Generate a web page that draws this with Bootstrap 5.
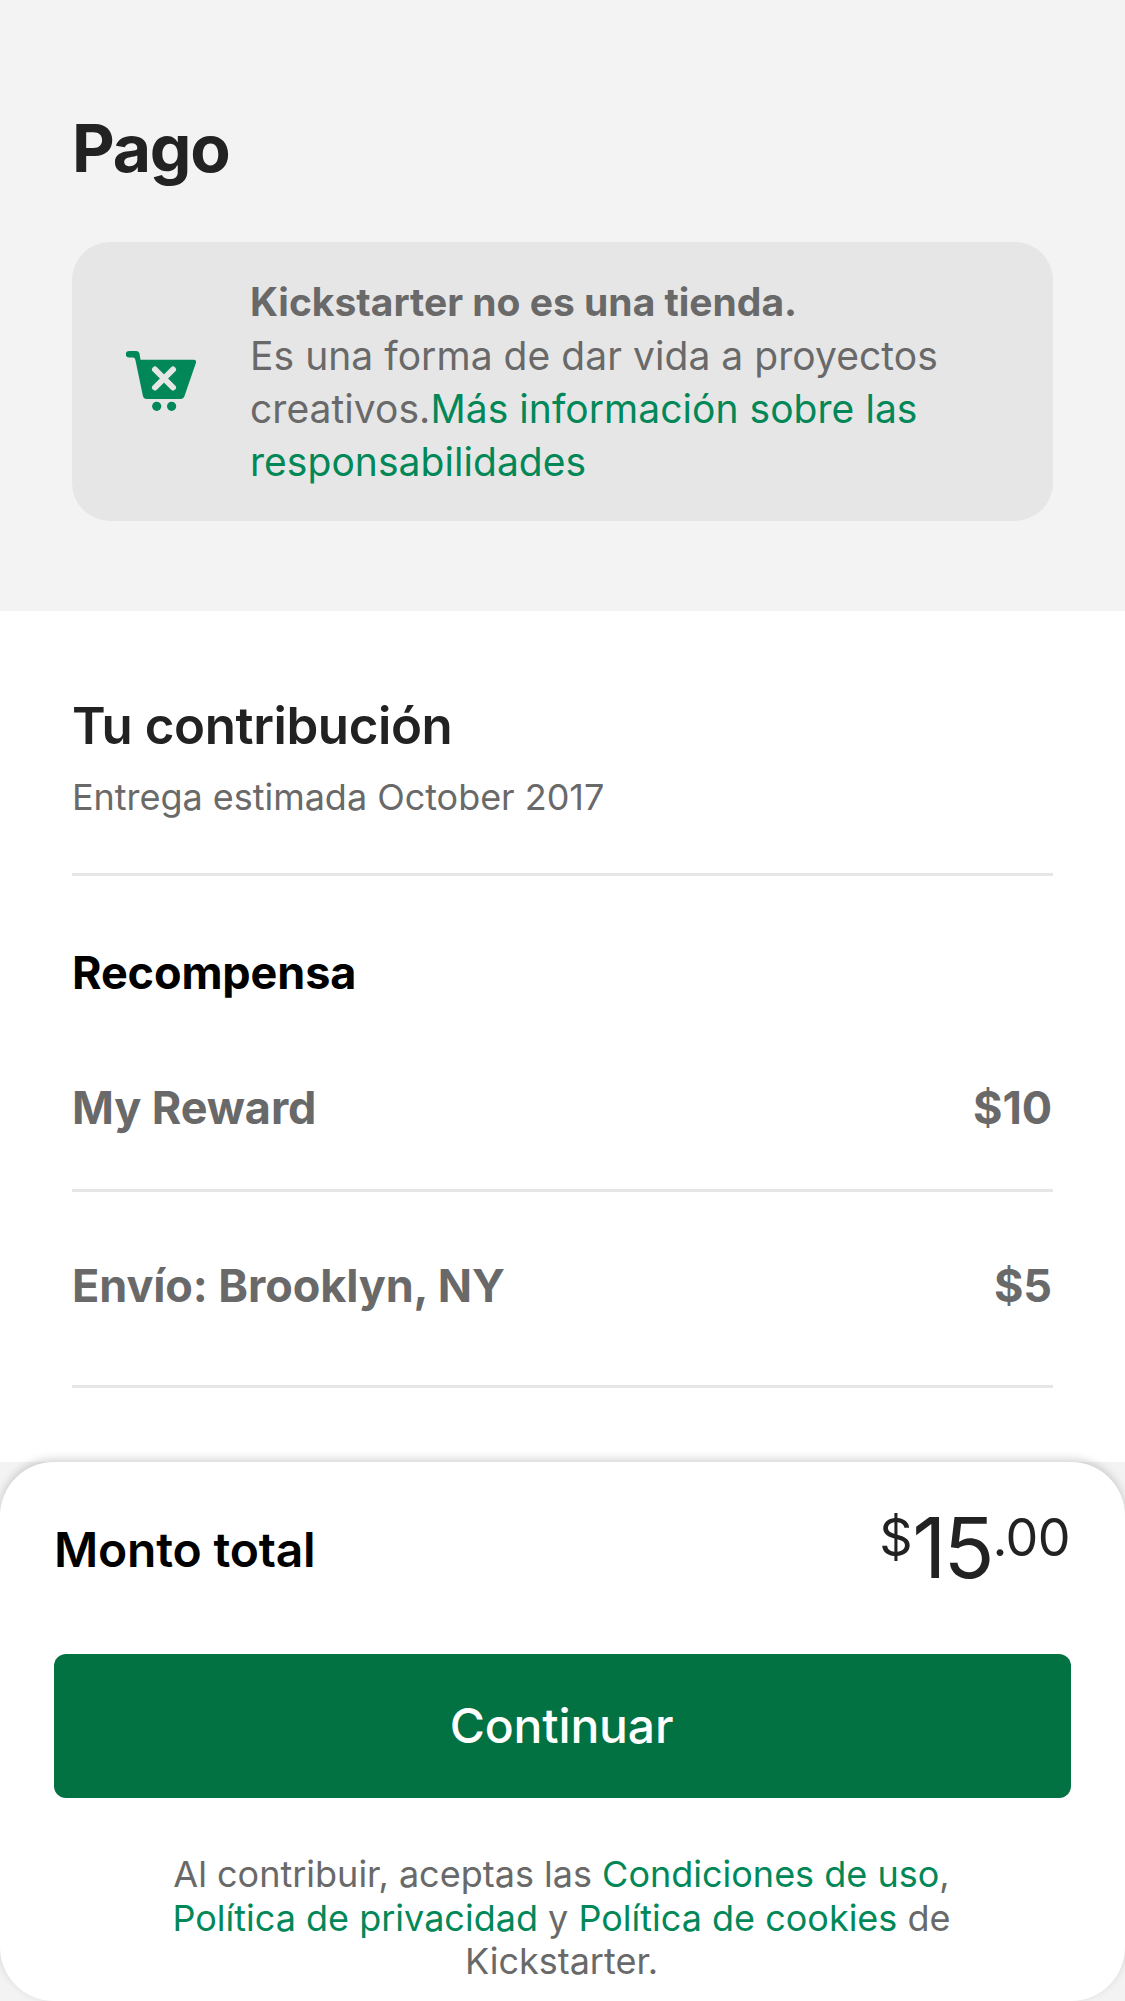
<!DOCTYPE html>
<html lang="es"><head><meta charset="utf-8"><meta name="viewport" content="width=device-width, initial-scale=1"><title>Pago</title>
<link href="https://cdn.jsdelivr.net/npm/bootstrap@5.3.0/dist/css/bootstrap.min.css" rel="stylesheet">
<style>
body{font-family:Inter,sans-serif;background:#f3f3f3;color:#696969;height:2001px;overflow:hidden}
a{color:#028858;text-decoration:none}
.head-area{height:611px;padding:109px 72px 0}
.page-title{font-size:66px;font-weight:700;line-height:78px;letter-spacing:-1.2px;color:#222;margin:0 0 55px}
.notice{height:279px;background:#e6e6e6;border-radius:38px;padding:0 54px}
.notice svg{width:70px;height:60px;margin:0 54px 2px 0}
.notice-text{font-size:39px;line-height:53.3px;letter-spacing:.05px;white-space:nowrap;padding-top:1px}
.notice-text b{letter-spacing:0}
.pledge-area{height:851px;padding:86px 72px 0;background:#fff}
.pledge-title{font-size:51px;font-weight:600;line-height:58px;letter-spacing:-.4px;color:#222;margin:0}
.delivery{font-size:36px;line-height:44px;letter-spacing:-.03px;margin:20px 0 54px}
.rule{height:3px;background:#e6e6e6}
.reward-title{font-size:45px;font-weight:700;line-height:54px;letter-spacing:-.12px;color:#000;margin:70px 0 81px}
.line-item{font-size:45px;font-weight:700;line-height:54px;letter-spacing:-.1px}
.line-item span:last-child{padding-right:1px}
.item-gap{margin-top:54px}
.ship-gap{margin-top:67px}
.ship-rule{margin-top:72px}
.total-sheet{height:539px;background:#fff;border-radius:54px;padding:0 54px;box-shadow:0 -3px 9px rgba(0,0,0,.17)}
.total-row{height:192px}
.total-label{font-size:48px;font-weight:600;line-height:58px;letter-spacing:-.2px;color:#000;margin-top:59px}
.total-price{color:#222;font-size:84px;line-height:100px;letter-spacing:-3px;margin-top:36px}
.total-price span{font-size:52px;line-height:62px;letter-spacing:-.3px;margin-top:9px}
.total-price .cents{letter-spacing:-.6px;padding-left:1px;padding-right:1px}
.continue-btn,.continue-btn:hover{height:144px;background:#037242;color:#fff;border:0;border-radius:12px;font-size:48px;font-weight:500;letter-spacing:-.15px;padding:0 2px 0 0}
.terms{font-size:36px;line-height:43.5px;margin-top:55px;padding-right:2px}
</style></head><body>
<header class="head-area"><h1 class="page-title">Pago</h1>
<div class="notice d-flex align-items-center"><svg viewBox="0 0 70 60"><path fill="#028858" d="M3 0h7.500q2.500 0 3 2.500L14.500 8.700H67.500q3.500 0 2.300 3.600L58.500 45q-1 3-4 3H21q-3.500 0-4.200-3.500L9.500 9.500Q9 6.500 7 6.500H3a3.200 3.200 0 0 1 0-6.500z"/><path d="M29 18.500l18 18M47 18.500l-18 18" stroke="#e6e6e6" stroke-width="6" stroke-linecap="round"/><circle cx="30.700" cy="55.300" r="4.600" fill="#028858"/><circle cx="45.600" cy="55.300" r="4.600" fill="#028858"/></svg>
<div class="notice-text"><b>Kickstarter no es una tienda.</b><br>Es una forma de dar vida a proyectos<br>creativos.<a href="#">Más información sobre las<br>responsabilidades</a></div></div></header>
<main class="pledge-area"><h2 class="pledge-title">Tu contribución</h2><p class="delivery">Entrega estimada October 2017</p><div class="rule"></div>
<h3 class="reward-title">Recompensa</h3>
<div class="line-item d-flex justify-content-between"><span>My Reward</span><span>$10</span></div><div class="rule item-gap"></div>
<div class="line-item ship-gap d-flex justify-content-between"><span>Envío: Brooklyn, NY</span><span>$5</span></div><div class="rule ship-rule"></div></main>
<footer class="total-sheet"><div class="total-row d-flex justify-content-between align-items-start"><div class="total-label">Monto total</div><div class="total-price d-flex align-items-start"><span>$</span>15<span class="cents">.00</span></div></div>
<button class="btn continue-btn w-100">Continuar</button>
<p class="terms text-center">Al contribuir, aceptas las <a href="#">Condiciones de uso</a>,<br><a href="#">Política de privacidad</a> y <a href="#">Política de cookies</a> de<br>Kickstarter.</p></footer>
<script src="https://cdn.jsdelivr.net/npm/bootstrap@5.3.0/dist/js/bootstrap.bundle.min.js"></script></body></html>
